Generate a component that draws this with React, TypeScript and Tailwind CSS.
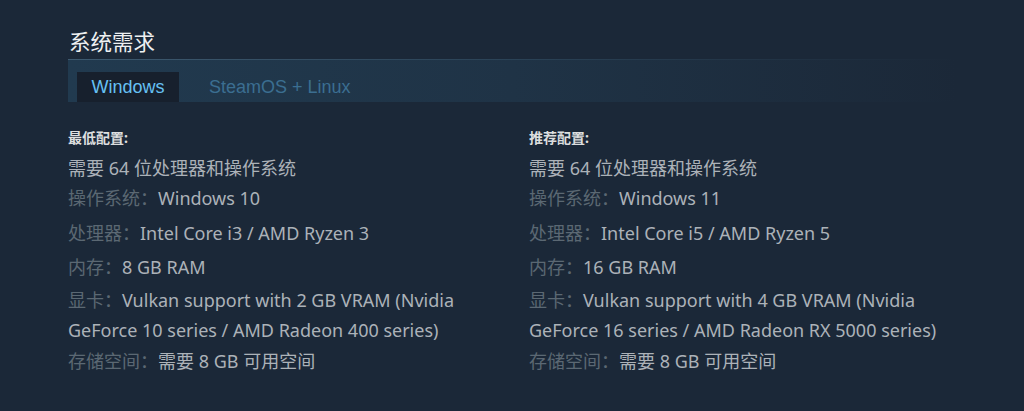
const minSpec = [
  { label: "操作系统：", value: "Windows 10" },
  { label: "处理器：", value: "Intel Core i3 / AMD Ryzen 3" },
  { label: "内存：", value: "8 GB RAM" },
  {
    label: "显卡：",
    value: "Vulkan support with 2 GB VRAM (Nvidia GeForce 10 series / AMD Radeon 400 series)",
  },
  { label: "存储空间：", value: "需要 8 GB 可用空间" },
];

const recSpec = [
  { label: "操作系统：", value: "Windows 11" },
  { label: "处理器：", value: "Intel Core i5 / AMD Ryzen 5" },
  { label: "内存：", value: "16 GB RAM" },
  {
    label: "显卡：",
    value: "Vulkan support with 4 GB VRAM (Nvidia GeForce 16 series / AMD Radeon RX 5000 series)",
  },
  { label: "存储空间：", value: "需要 8 GB 可用空间" },
];

// spacing below each row, read off the screenshot
const rowGap = ["mb-[5px]", "mb-[4px]", "mb-[3px]", "mb-[1px]", "mb-0"];

const font = {
  fontFamily: '"Noto Sans", "Noto Sans CJK SC", sans-serif',
};

const tabFont = { fontFamily: '"Liberation Sans", Arial, sans-serif' };

const SpecColumn = ({ title, items }: { title: string; items: typeof minSpec }) => (
  <div className="w-[440px] shrink-0">
    <div className="text-[14px] font-bold text-[#dcdedf] leading-[16px] mb-[7px]">{title}</div>
    <div className="text-[18px] text-[#acb2b8] leading-[30px]">需要 64 位处理器和操作系统</div>
    <ul>
      {items.map((it, i) => (
        <li key={it.label} className={`text-[18px] text-[#acb2b8] leading-[30px] ${rowGap[i]}`}>
          <span className="text-[#5b6873]">{it.label}</span>
          {it.value}
        </li>
      ))}
    </ul>
  </div>
);

export default function App() {
  return (
    <div className="w-[1024px] h-[411px] bg-[#1b2838] overflow-hidden" style={font}>
      <div className="ml-[68px] w-[910px] pt-[28px]">
        <h2 className="text-[21.5px] text-[#eef0f1] leading-[28px] pl-[1px] pb-[3px]">系统需求</h2>
        <div className="h-[1px] mr-[20px] bg-gradient-to-r from-[#3e5a70] via-[#2a4256] to-transparent" />
        <div className="h-[42px] mr-[20px] flex items-end pl-[9px] bg-gradient-to-r from-[#213a4f] via-[#1f3346] to-[#1b2838]">
          <div
            className="h-[30px] w-[102px] bg-[#17202d] flex items-center justify-center text-[18px] text-[#66c0f4]"
            style={tabFont}
          >
            Windows
          </div>
          <div className="h-[30px] ml-[30px] flex items-center text-[18px] text-[#3b6e91]" style={tabFont}>
            SteamOS + Linux
          </div>
        </div>
        <div className="flex gap-[21px] pt-[28px]">
          <SpecColumn title="最低配置:" items={minSpec} />
          <SpecColumn title="推荐配置:" items={recSpec} />
        </div>
      </div>
    </div>
  );
}
